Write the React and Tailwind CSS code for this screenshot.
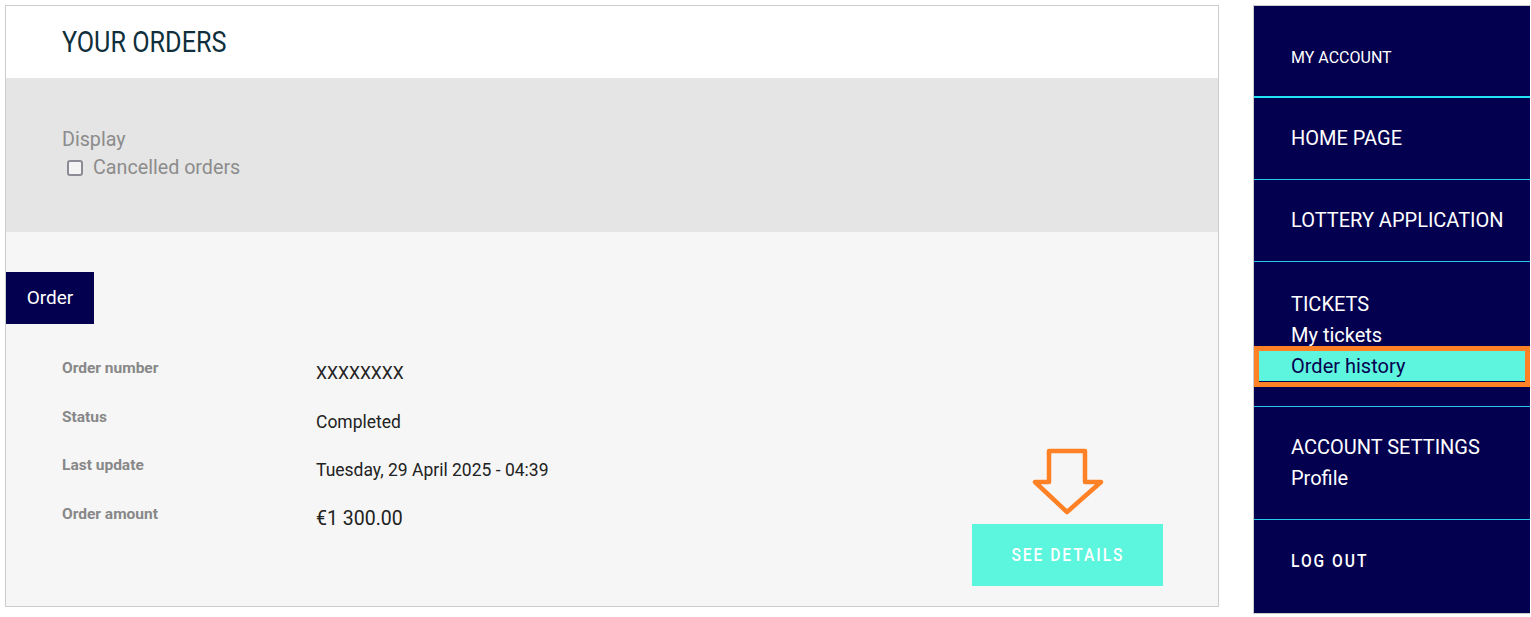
import React from 'react';

const orderRows = [
  { label: 'Order number', value: 'XXXXXXXX', size: 'text-[17.5px]' },
  { label: 'Status', value: 'Completed', size: 'text-[17.5px]' },
  { label: 'Last update', value: 'Tuesday, 29 April 2025 - 04:39', size: 'text-[17.5px]' },
  { label: 'Order amount', value: '€1 300.00', size: 'text-[19.5px]' }
];

function ArrowDown() {
  return (
    <svg width="74" height="69" viewBox="0 0 74 69" fill="none">
      <path
        d="M18 4 L54 4 L54 35 L70 35 L36 65 L4 35 L18 35 Z"
        stroke="#ff8125"
        strokeWidth="4.5"
        strokeLinejoin="round"
      />
    </svg>
  );
}

export default function App() {
  return (
    <div
      className="flex min-h-screen bg-white pt-[5px] pl-[5px]"
      style={{ fontFamily: 'Roboto, "Noto Sans", sans-serif' }}
    >
      {/* Orders card */}
      <div className="flex h-[602px] w-[1214px] flex-col border border-[#cccccc]">
        <div className="flex h-[72px] items-center bg-white pl-[56px]">
          <h1 className="inline-block origin-left scale-x-[0.84] text-[30px] leading-none text-[#0e2f3b]">
            YOUR ORDERS
          </h1>
        </div>

        <div className="h-[154px] bg-[#e5e5e5] pl-[56px] pt-[48px] text-[19.7px] leading-[28px] text-[#8c8c8c]">
          <div>Display</div>
          <label className="flex items-center">
            <span className="ml-[5px] mr-[10px] h-[16px] w-[16px] rounded-[3px] border-2 border-[#8b8b96] bg-[#f4f4f4]" />
            Cancelled orders
          </label>
        </div>

        <div className="flex flex-1 bg-[#f6f6f6]">
          <div className="flex-1 pt-[40px]">
            <div className="flex h-[52px] w-[88px] items-center justify-center bg-[#03004f] text-[19px] text-white">
              Order
            </div>
            <div className="mt-[34px]">
              {orderRows.map((row, i) => (
                <div key={i} className="flex h-[48.5px] pl-[56px]">
                  <div className="w-[254px] text-[15.5px] font-bold leading-[20px] text-[#888888]">
                    {row.label}
                  </div>
                  <div className={`pt-[5px] leading-[20px] text-[#222222] ${row.size}`}>
                    {row.value}
                  </div>
                </div>
              ))}
            </div>
          </div>

          <div className="mb-[20px] mr-[55px] flex flex-col items-center justify-end gap-[8px]">
            <ArrowDown />
            <button className="flex h-[62px] w-[191px] items-center justify-center bg-[#5cf5dd] text-white">
              <span className="inline-block scale-x-[0.82] text-[19px] font-medium tracking-[2.4px]">SEE DETAILS</span>
            </button>
          </div>
        </div>
      </div>

      {/* Account sidebar */}
      <div className="ml-[34px] h-[609px] w-[277px] border-y border-l border-[#cccccc] bg-[#03004f] text-white">
        <div className="pl-[37px] pt-[36px] pb-[23px] text-[16px] leading-[31px]">MY ACCOUNT</div>
        <div className="h-[2px] bg-[#20e4f4]" />

        <div className="py-[25px] pl-[37px] text-[20px] leading-[31px]">HOME PAGE</div>
        <div className="h-px bg-[#29c9ee]" />

        <div className="py-[25px] pl-[37px] text-[20px] leading-[31px]">LOTTERY APPLICATION</div>
        <div className="h-px bg-[#29c9ee]" />

        <div className="pt-[27px] pb-[24px] text-[20px] leading-[31px]">
          <div className="pl-[37px]">TICKETS</div>
          <div className="pl-[37px]">My tickets</div>
          <div className="mx-[5px] h-[31px] border-b border-[#03004f] bg-[#5ef5de] pl-[32px] leading-[30px] text-[#03004f] outline-[5px] outline-solid outline-[#ff8125]">
            Order history
          </div>
        </div>
        <div className="h-px bg-[#29c9ee]" />

        <div className="py-[25px] pl-[37px] text-[20px] leading-[31px]">
          <div>ACCOUNT SETTINGS</div>
          <div>Profile</div>
        </div>
        <div className="h-px bg-[#29c9ee]" />

        <div className="py-[25px] pl-[37px] text-[19px] leading-[31px]">
          <span className="inline-block origin-left scale-x-[0.82] font-medium tracking-[2.4px]">LOG OUT</span>
        </div>
      </div>
    </div>
  );
}
